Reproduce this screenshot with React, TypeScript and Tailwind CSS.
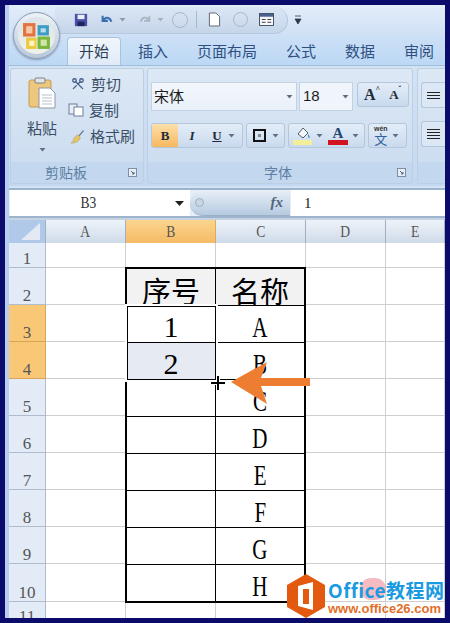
import { Scissors } from "lucide-react";

const cjk = "font-['Noto_Sans_CJK_SC','Noto_Sans',sans-serif]";
const rowNums = [2, 3, 4, 5, 6, 7, 8, 9, 10];
const names = ["A", "B", "C", "D", "E", "F", "G", "H"];
const tabs = ["插入", "页面布局", "公式", "数据", "审阅"];

function Caret({ className = "" }: { className?: string }) {
  return (
    <svg viewBox="0 0 7 4" className={`h-[4px] w-[7px] ${className}`}>
      <path d="M0.5 0h6L3.5 3.5z" fill="#5f6f84" />
    </svg>
  );
}

function OfficeButton() {
  return (
    <div className="absolute left-[4px] top-[7px] z-10 grid h-[47px] w-[47px] place-items-center rounded-full border border-[#8b9cb2] bg-gradient-to-b from-[#eef3f8] to-[#b9c8d9] shadow-[0_1px_2px_rgba(60,80,110,0.5)]">
      <div className="grid h-[37px] w-[37px] place-items-center rounded-full bg-gradient-to-b from-[#dce4ea] to-[#eef2e8]">
        <svg viewBox="0 0 30 30" className="h-[31px] w-[31px]">
          <rect x="2" y="3" width="12" height="13" fill="#e2733f" />
          <rect x="5" y="6" width="6" height="7" fill="#f4c9a6" />
          <rect x="16" y="5" width="11" height="10" fill="#3f9dc4" />
          <rect x="19" y="8" width="5" height="4" fill="#b7dfee" />
          <rect x="5" y="17" width="10" height="11" fill="#ecc93f" />
          <rect x="8" y="20" width="5" height="5" fill="#fdf4c0" />
          <rect x="16" y="16" width="12" height="12" fill="#7ab53c" />
          <rect x="19" y="19" width="6" height="6" fill="#cfe6a8" />
        </svg>
      </div>
    </div>
  );
}

function QuickAccess() {
  return (
    <div className="flex h-[30px] items-center bg-gradient-to-b from-[#e3edfa] to-[#d0e0f5] pl-[46px]">
      <div className="flex h-[27px] w-[233px] items-center gap-[8px] rounded-r-full border-b border-r border-[#b3c7df] bg-gradient-to-b from-[#dbe6f4] to-[#c5d6ea] pl-[19px]">
        <svg viewBox="0 0 16 16" className="h-[14px] w-[14px]">
          <rect x="1" y="1" width="14" height="14" fill="#4a4fa8" />
          <rect x="4" y="2" width="8" height="5" fill="#e8eef8" />
          <rect x="4" y="10" width="8" height="5" fill="#20245e" />
        </svg>
        <svg viewBox="0 0 16 16" className="ml-[4px] h-[14px] w-[14px]">
          <path d="M3 3v6h6M3 9c3-5 8-5 10 1" fill="none" stroke="#3c6fb0" strokeWidth="2.4" />
        </svg>
        <Caret className="-ml-[3px] opacity-60" />
        <svg viewBox="0 0 16 16" className="ml-[4px] h-[14px] w-[14px]">
          <path d="M13 3v6H7M13 9C10 4 5 4 3 10" fill="none" stroke="#a9b4c2" strokeWidth="2" />
        </svg>
        <Caret className="-ml-[3px] opacity-40" />
        <div className="h-[16px] w-[16px] rounded-full border border-[#a9b6c6]" />
        <div className="h-[17px] w-px bg-[#a7b8cc]" />
        <svg viewBox="0 0 14 16" className="ml-[3px] h-[15px] w-[13px]">
          <path d="M1.5 1h7l4 4v10h-11z" fill="#fff" stroke="#56606e" />
        </svg>
        <div className="ml-[4px] h-[15px] w-[15px] rounded-full border border-[#a9b6c6]" />
        <svg viewBox="0 0 16 14" className="ml-[3px] h-[13px] w-[15px]">
          <rect x="0.5" y="0.5" width="15" height="13" fill="#f5f7fa" stroke="#3f4a5a" />
          <rect x="1" y="1" width="14" height="3" fill="#46628f" />
          <path d="M3 7h4M3 10h4M9 7h4M9 10h4" stroke="#333" />
        </svg>
      </div>
      <svg viewBox="0 0 8 10" className="ml-[6px] h-[10px] w-[8px]">
        <path d="M1 1h6M1 4h6L4 9z" fill="#2c3a4c" stroke="#2c3a4c" strokeWidth="0.8" />
      </svg>
    </div>
  );
}

function Tabs() {
  return (
    <div className={`flex h-[31px] items-end gap-[29px] border-b border-[#9fbcd9] bg-gradient-to-b from-[#cde0f6] to-[#bcd8f5] pl-[70px] text-[15px] text-[#2e5080] ${cjk}`}>
      <div className="-mx-3 flex h-[28px] shrink-0 items-center whitespace-nowrap rounded-t-[4px] border-x border-t border-[#a9c3dd] bg-gradient-to-b from-[#f1f6fc] to-[#dfeaf7] px-[11px] text-[#2c3e55]">
        开始
      </div>
      {tabs.map((t) => (
        <div key={t} className="flex h-[28px] shrink-0 items-center whitespace-nowrap">
          {t}
        </div>
      ))}
    </div>
  );
}

function Launcher() {
  return (
    <svg viewBox="0 0 9 9" className="h-[9px] w-[9px]">
      <rect x="0.5" y="0.5" width="8" height="8" fill="#e6eef8" stroke="#7d8fa6" />
      <path d="M3 3l3 3M6 4v2H4" fill="none" stroke="#4d5f75" />
    </svg>
  );
}

function ClipboardGroup() {
  return (
    <div className="flex h-[116px] w-[135px] flex-col rounded-[3px] border border-[#bccfe3] bg-gradient-to-b from-[#dde8f5] to-[#c9dbef]">
      <div className="flex h-[93px] text-[#3a4f66]">
        <div className="flex w-[59px] flex-col items-center pl-[3px] pt-[8px]">
          <svg viewBox="0 0 28 32" className="h-[32px] w-[28px]">
            <rect x="1" y="3" width="22" height="27" rx="2" fill="#eec77f" stroke="#c79a50" />
            <rect x="7" y="1" width="10" height="5" rx="1" fill="#dfe4ea" stroke="#7c7f85" />
            <path d="M11 11h11l5 5v15H11z" fill="#fff" stroke="#8b98a8" />
            <path d="M14 18h10M14 21h10M14 24h10M14 27h10" stroke="#b8c1cc" />
          </svg>
          <div className={`mt-[8px] text-[15px] leading-[22px] ${cjk}`}>粘贴</div>
          <Caret className="mt-[9px]" />
        </div>
        <div className={`flex flex-col gap-[6px] pt-[5px] text-[15px] leading-[20px] ${cjk}`}>
          <div className="flex items-center gap-[6px] whitespace-nowrap">
            <Scissors size={14} strokeWidth={2.2} className="ml-px rotate-90 text-[#3f5a85]" />
            <span>剪切</span>
          </div>
          <div className="-ml-[2px] flex items-center gap-[5px] whitespace-nowrap">
            <svg viewBox="0 0 16 14" className="h-[14px] w-[16px]">
              <rect x="1" y="1" width="8" height="10" fill="#e8eef6" stroke="#6b7f9a" />
              <rect x="6" y="4" width="9" height="9" fill="#fff" stroke="#6b7f9a" />
            </svg>
            <span>复制</span>
          </div>
          <div className="flex items-center gap-[5px] whitespace-nowrap">
            <svg viewBox="0 0 16 16" className="h-[15px] w-[15px]">
              <path d="M9 7l5-6 1 1-5 6z" fill="#6f7f93" />
              <path d="M8 6l3 3c-1 4-5 6-10 6 2-1 3-3 3-5z" fill="#e4c568" stroke="#a78f45" strokeWidth="0.5" />
            </svg>
            <span>格式刷</span>
          </div>
        </div>
      </div>
      <div className={`flex h-[22px] flex-1 items-center justify-between rounded-b-[3px] bg-[#c3d8ee] pl-[34px] pr-[6px] text-[14px] text-[#5d7da3] ${cjk}`}>
        <span>剪贴板</span>
        <Launcher />
      </div>
    </div>
  );
}

function FontGroup() {
  const btn = "flex h-[25px] items-center rounded-[3px] border border-[#b4c6da] bg-gradient-to-b from-[#e3edf8] to-[#c9daee]";
  return (
    <div className="ml-[3px] flex h-[116px] w-[266px] flex-col rounded-[3px] border border-[#bccfe3] bg-gradient-to-b from-[#dde8f5] to-[#c9dbef]">
      <div className="flex h-[93px] flex-col px-[3px] pt-[13px]">
        <div className="flex h-[29px] text-[#1c1c1c]">
          <div className={`flex w-[146px] items-center justify-between border border-[#c3d2e3] bg-gradient-to-b from-[#f3f7fc] to-[#e9f0f9] pl-[2px] pr-[3px] text-[15px] ${cjk}`}>
            <span>宋体</span>
            <Caret />
          </div>
          <div className="ml-[2px] flex w-[54px] items-center justify-between border border-[#c3d2e3] bg-[#f0f5fb] pl-[3px] pr-[3px] font-['Liberation_Sans',sans-serif] text-[15px]">
            <span>18</span>
            <Caret />
          </div>
          <div className={`${btn} ml-[4px] w-[52px] font-['Liberation_Serif',serif] font-bold text-[#1f2a38]`}>
            <span className="ml-[6px] text-[16px]">A</span>
            <span className="-mt-[10px] text-[8px]">^</span>
            <span className="ml-[9px] text-[13px]">A</span>
            <span className="-mt-[10px] text-[8px]">ˇ</span>
          </div>
        </div>
        <div className="mt-[12px] flex gap-[3px]">
          <div className={`${btn} w-[92px] overflow-hidden font-['Liberation_Serif',serif] text-[13px] font-bold text-[#1f2a38]`}>
            <span className="flex h-full w-[26px] items-center justify-center bg-gradient-to-b from-[#fde0a8] to-[#f6b860]">B</span>
            <span className="flex h-full w-[28px] items-center justify-center italic">I</span>
            <span className="flex w-[22px] items-center justify-center underline">U</span>
            <Caret />
          </div>
          <div className={`${btn} w-[39px] pl-[6px]`}>
            <div className="grid h-[13px] w-[13px] place-items-center border-2 border-[#111]">
              <div className="h-[3px] w-[3px] bg-[#888]" />
            </div>
            <Caret className="ml-[6px]" />
          </div>
          <div className={`${btn} w-[77px] pl-[4px]`}>
            <div className="flex flex-col items-center">
              <svg viewBox="0 0 18 14" className="h-[14px] w-[18px]">
                <path d="M4 8l5-6 5 5-5 5z" fill="#f4f6fa" stroke="#4f5f72" />
                <path d="M14 8c2 2 2 4 1 4s-1-2-1-4z" fill="#4b89c8" />
              </svg>
              <div className="h-[5px] w-[19px] bg-[#f2ee9a]" />
            </div>
            <Caret className="ml-[4px]" />
            <div className="ml-[5px] flex flex-col items-center">
              <span className="font-['Liberation_Serif',serif] text-[15px] font-bold leading-[14px] text-[#26466f]">A</span>
              <div className="h-[5px] w-[20px] bg-[#d2141e]" />
            </div>
            <Caret className="ml-[4px]" />
          </div>
          <div className={`${btn} w-[39px] pl-[5px]`}>
            <div className={`flex flex-col items-center text-[#2f5f9e] ${cjk}`}>
              <span className="font-['Liberation_Sans',sans-serif] text-[7px] font-bold leading-[7px] text-[#333]">wén</span>
              <span className="text-[13px] leading-[14px]">文</span>
            </div>
            <Caret className="ml-[4px]" />
          </div>
        </div>
      </div>
      <div className={`flex h-[22px] flex-1 items-center justify-between rounded-b-[3px] bg-[#c3d8ee] pl-[116px] pr-[6px] text-[14px] text-[#5d7da3] ${cjk}`}>
        <span>字体</span>
        <Launcher />
      </div>
    </div>
  );
}

function AlignGroup() {
  const line = "h-px w-[13px] bg-[#222]";
  return (
    <div className="ml-[4px] flex h-[116px] flex-1 flex-col rounded-l-[3px] border border-r-0 border-[#bccfe3] bg-gradient-to-b from-[#dde8f5] to-[#c9dbef]">
      <div className="flex h-[93px] flex-col gap-[13px] pl-[3px] pt-[13px]">
        <div className="flex h-[26px] w-[24px] flex-col items-center justify-center gap-[2px] rounded-l-[3px] border border-r-0 border-[#b4c6da] bg-[#dbe7f5]">
          <div className={line} />
          <div className={line} />
          <div className={line} />
        </div>
        <div className="flex h-[26px] w-[24px] flex-col items-center justify-center gap-[2px] rounded-l-[3px] border border-r-0 border-[#b4c6da] bg-[#dbe7f5]">
          <div className={line} />
          <div className={line} />
          <div className={line} />
          <div className={line} />
        </div>
      </div>
      <div className="h-[22px] flex-1 bg-[#c3d8ee]" />
    </div>
  );
}

function FormulaBar() {
  return (
    <div className="flex h-[34px] flex-col bg-[#cfe0f3]">
      <div className="h-[2px] bg-[#d3e3f6]" />
      <div className="h-[2px] bg-[#9db4cc]" />
      <div className="flex h-[26px] items-center bg-[#e4edf8] pl-px">
        <div className="flex h-full w-[180px] items-center justify-between bg-white pl-[69px] pr-[6px] font-['Liberation_Serif',serif] text-[16px] text-[#333]">
          <span className="inline-block scale-x-[0.85]">B3</span>
          <svg viewBox="0 0 9 5" className="h-[5px] w-[9px]">
            <path d="M0 0h9L4.5 5z" fill="#222" />
          </svg>
        </div>
        <div className="flex h-full w-[100px] items-center justify-between rounded-l-full border-b border-[#9eb0c4] bg-gradient-to-b from-[#e8eff7] to-[#b6cbe0] pl-[5px] pr-[7px]">
          <div className="h-[9px] w-[9px] rounded-full border border-[#9eb0c4] bg-[#c9d6e4]" />
          <span className="font-['Liberation_Serif',serif] text-[15px] font-bold italic text-[#53657c]">fx</span>
        </div>
        <div className="ml-px flex h-full flex-1 items-center bg-white pl-[13px] font-['Liberation_Serif',serif] text-[15px] text-[#222]">1</div>
      </div>
      <div className="h-[2px] bg-[#9db4cc]" />
      <div className="h-[2px] bg-[#c5d3e2]" />
    </div>
  );
}

function Sheet() {
  const head = "flex items-center justify-center border-r border-[#9fb0c4] bg-gradient-to-b from-[#eef3f9] to-[#cfdbe9] text-[#555]";
  const hot = "flex items-center justify-center border-r border-[#e0a95e] bg-gradient-to-b from-[#fbd58e] to-[#f5bb66] text-[#555]";
  const numCell = "flex items-end justify-center border-b border-r border-[#aebccd] bg-[#e3ebf7] text-[#555]";
  const numHot = "flex items-end justify-center border-b border-r border-[#d9a35a] bg-[#f9c877] text-[#555]";
  const cell = "border-b border-r border-[#cfcfcf] bg-white";
  const letter = "inline-block scale-x-[0.8]";
  return (
    <div className="relative grid h-[398px] grid-cols-[37px_80px_90px_90px_80px_59px] grid-rows-[23px_25px_repeat(8,37px)_38px_16px] overflow-hidden bg-white font-['Liberation_Serif',serif] text-[17px] leading-[17px]">
      <div className="z-10 col-start-3 col-end-5 row-start-3 row-end-12 -ml-px -mt-px grid h-[336px] w-[181px] grid-cols-[89px_88px] grid-rows-[36px_repeat(8,37px)] border-2 border-black">
        <div className={`flex items-end justify-center border-r border-black bg-[#f2f2f2] text-[29px] leading-none text-black ${cjk}`}>序号</div>
        <div className={`flex items-end justify-center bg-[#f2f2f2] text-[29px] leading-none text-black ${cjk}`}>名称</div>
        {names.map((n, i) => (
          <div key={n} className="contents">
            <div className={`flex items-end justify-center border-r border-t border-black ${i === 1 ? "bg-[#e6eaf3]" : "bg-white"}`}>
              {i < 2 && <span className="text-[30px] leading-none text-black">{i + 1}</span>}
            </div>
            <div className="flex items-end justify-center border-t border-black bg-white">
              <span className="inline-block scale-x-[0.7] text-[30px] leading-none text-black">{n}</span>
            </div>
          </div>
        ))}
      </div>

      <div className="border-r border-[#9fb0c4] bg-[#b0c9e8]">
        <svg viewBox="0 0 36 23" className="h-[23px] w-[36px]">
          <path d="M31 3v17H12z" fill="#e3eaf3" />
        </svg>
      </div>
      <div className={head}><span className={letter}>A</span></div>
      <div className={hot}><span className={letter}>B</span></div>
      <div className={head}><span className={letter}>C</span></div>
      <div className={head}><span className={letter}>D</span></div>
      <div className={head}><span className={letter}>E</span></div>

      <div className={numCell}>1</div>
      <div className={cell} />
      <div className={cell} />
      <div className={cell} />
      <div className={cell} />
      <div className={cell} />

      {rowNums.map((n) => (
        <div key={n} className="contents">
          <div className={n === 3 || n === 4 ? numHot : numCell}>{n}</div>
          <div className={cell} />
          <div className={cell} />
          <div className={cell} />
        </div>
      ))}

      <div className="flex justify-center overflow-hidden border-r border-[#aebccd] bg-[#e3ebf7] pt-[6px] text-[#555]">11</div>
      <div className="border-r border-[#cfcfcf]" />
      <div className="border-r border-[#cfcfcf]" />
      <div className="border-r border-[#cfcfcf]" />
      <div className="border-r border-[#cfcfcf]" />
      <div className="border-r border-[#cfcfcf]" />

      {/* 选区框 */}
      <div className="absolute left-[118px] top-[86px] z-20 h-[74px] w-[89px] border border-black outline-2 outline-white" />

      {/* 箭头和光标 */}
      <svg viewBox="0 0 110 50" className="absolute left-[196px] top-[138px] z-30 h-[50px] w-[110px]">
        <path d="M26 24 L62 4 L56 20 L105 20 L105 28 L56 28 L62 46 Z" fill="#ed7d31" />
        <path d="M6 25h14M13 18v14" stroke="#fff" strokeWidth="4" />
        <path d="M6 25h14M13 18v14" stroke="#000" strokeWidth="2" />
      </svg>

      {/* 水印 */}
      <div className="absolute left-[351px] top-[358px] z-20 h-[22px] w-[26px] rounded-full bg-[#f0a0a8]/70" />
      <div className="absolute left-[278px] top-[354px] z-30 flex items-center whitespace-nowrap">
        <svg viewBox="0 0 38 44" className="h-[44px] w-[38px] shrink-0">
          <path d="M19 0l19 11v22L19 44 0 33V11z" fill="#e2590f" />
          <path d="M11 12l15-4v28l-15-4z" fill="#fff" />
          <rect x="16" y="15" width="6" height="15" fill="#e2590f" />
        </svg>
        <div className="ml-[3px] flex flex-col">
          <span className={`text-[19px] font-bold leading-[24px] tracking-[0.5px] text-[#1a9ae0] ${cjk}`}>Office教程网</span>
          <span className="font-['Liberation_Sans',sans-serif] text-[13px] font-bold leading-[13px] text-[#e0702a]">www.office26.com</span>
        </div>
      </div>
    </div>
  );
}

export default function App() {
  return (
    <div className="h-[623px] w-[450px] overflow-hidden bg-[#0b0b6b] p-[5px]">
      <div className="relative flex h-[613px] flex-col overflow-hidden border-l-[4px] border-[#b9cdf0] bg-[#c5daf3]">
        <OfficeButton />
        <QuickAccess />
        <Tabs />
        <div className="flex h-[120px] bg-gradient-to-b from-[#d3e3f6] to-[#c3d8f0] pl-px pt-[2px]">
          <ClipboardGroup />
          <FontGroup />
          <AlignGroup />
        </div>
        <FormulaBar />
        <Sheet />
      </div>
    </div>
  );
}
